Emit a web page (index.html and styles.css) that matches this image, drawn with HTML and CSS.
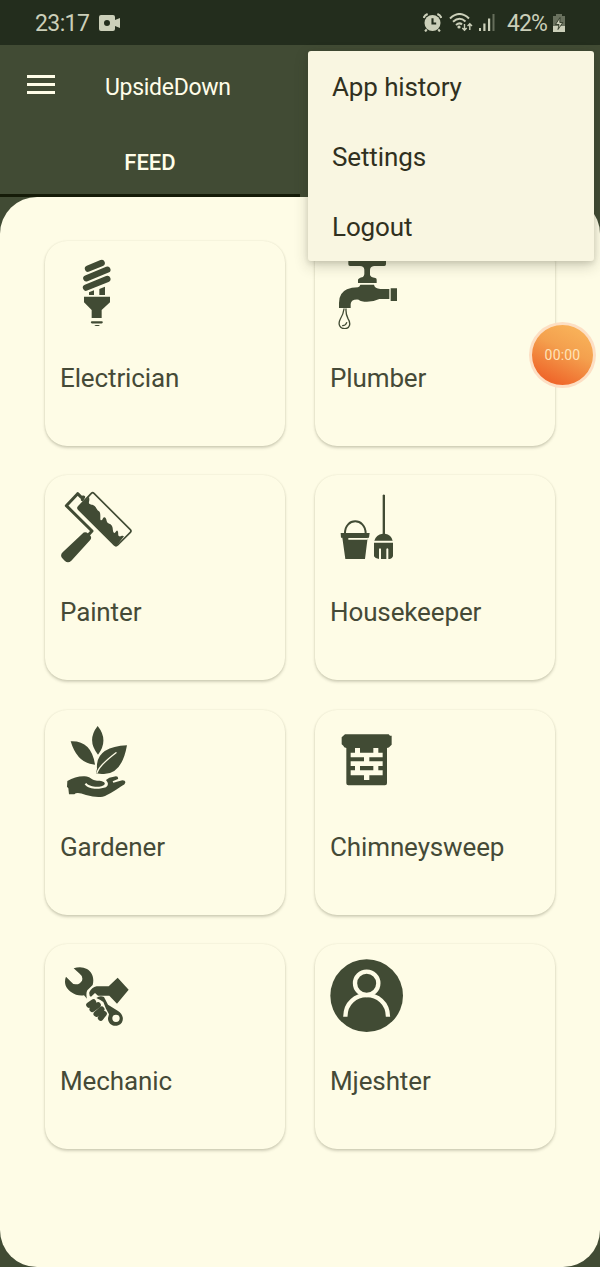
FILE: index.html
```html
<!DOCTYPE html>
<html lang="en">
<head>
<meta charset="utf-8">
<title>UpsideDown</title>
<link rel="stylesheet" href="styles.css">
</head>
<body>
<div class="app">
  <div class="statusbar">
    <span class="clock">23:17</span>
    <svg class="cam" viewBox="0 0 22 16"><path fill-rule="evenodd" d="M2 0H14Q16 0 16 2V5L21 3V13L16 11V14Q16 16 14 16H2Q0 16 0 14V2Q0 0 2 0ZM8 5A3 3 0 1 0 8 11A3 3 0 1 0 8 5Z"/></svg>
    <span class="grow"></span>
    <svg class="alarm" viewBox="0 0 18 18"><circle cx="9" cy="9.500" r="7.600"/><path d="M3.500 15.500L2 17.500M14.500 15.500L16 17.500M.6 4.600Q1.500 2 4.400 .9M17.400 4.600Q16.500 2 13.600 .9" class="s2"/><path d="M9 5V10H12.500" class="cut"/></svg>
    <svg class="wifi" viewBox="0 0 24 19"><path class="s2" d="M1 5.500Q10.500 -3.500 20 5.500M4 8.800Q10.500 3 16.500 8.500M7 12Q10.500 9 13 11.500"/><circle cx="10" cy="14" r="1.600"/><path class="s1" d="M15.500 11V17M13.300 15L15.500 17.300L17.700 15M20.800 17V11M18.600 13L20.800 10.700L23 13"/></svg>
    <svg class="signal" viewBox="0 0 16 17"><path d="M0 14h2v3H0zM4.300 9.500h2.200V17H4.300zM9 4.500h2.200V17H9z"/><path opacity=".4" d="M13.500 0h2v17h-2z"/></svg>
    <span class="percent">42%</span>
    <svg class="battery" viewBox="0 0 12 18"><path opacity=".42" d="M3 0h6v2h3v11H0V2h3z"/><path d="M0 12h12v6H0z"/><path d="M7 3.500L2.500 10.500H6L5 15.500L9.800 8.500H6.800z" stroke="#232d1d" stroke-width=".8"/></svg>
  </div>
  <header class="header">
    <div class="toolbar">
      <svg class="burger" viewBox="0 0 28 20"><path d="M0 0h28v3H0zM0 8h28v3H0zM0 16h28v3H0z"/></svg>
      <h1 class="title">UpsideDown</h1>
    </div>
    <div class="tabs"><div class="tab">FEED</div></div>
  </header>
  <main class="sheet">
    <div class="grid">
      <article class="card">
        <svg class="icon" viewBox="60 63 220 220"><path class="tube" d="M144 101L185 84M139 130L202 104M138 158L202 132"/><path d="M147 172L162 166V180H147zM178 162L195 155V180H178zM132 185H210V202L185 225V249H155V225L132 202z"/><path d="M156 262H185" stroke-width="7" class="round"/><path d="M163 270H180L176 273H167z"/></svg>
        <h2 class="name">Electrician</h2>
      </article>
      <article class="card">
        <svg class="icon" viewBox="60 63 220 220"><path d="M115 73H228V88Q228 93 223 93H192Q180 94 180 105V120Q182 127 196 129Q200 130 200 134V144H144V134Q145 129 159 126Q163 122 163 117V104Q162 93 150 93H120Q115 93 115 88zM151 149H192Q194 160 211 162H238V192L208 192Q192 200 171 200Q153 200 146 194Q124 192 122 207V219H87V204Q87 173 111 163Q124 157 144 157Q149 156 151 149zM242 160H261V198H242z"/><path class="line" d="M102 222Q100 238 91 252C82 269 91 281 104 281C119 281 124 266 114 251Q107 238 108 222M110 263Q107 272 98 272"/></svg>
        <h2 class="name">Plumber</h2>
      </article>
      <article class="card">
        <svg class="icon" viewBox="60 46 220 220"><path class="arm" d="M127 75L131 67L124 68L113 57L79 93L156 169L143 183"/><path d="M127 177Q135 169 145 177L150 182Q157 189 150 197L94 258Q84 268 74 258L67 251Q59 242 68 233z"/><path d="M115 96L147 66Q149 75 147 81C145 90 153 89 159 91C169 95 169 105 176 109C182 112 181 122 181 132C181 139 187 138 189 131C192 124 199 128 200 139C202 149 213 146 216 154C220 161 217 170 222 175C227 177 228 166 232 168C237 171 232 182 238 185C243 187 246 180 252 185L232 211Q228 216 223 210L115 103Q112 100 115 96z"/><path class="roller" d="M116 96L154 56Q158 52 162 56L271 165Q275 169 271 173L233 211Q228 216 223 211L116 104Q112 100 116 96z"/></svg>
        <h2 class="name">Painter</h2>
      </article>
      <article class="card">
        <svg class="icon" viewBox="60 46 220 220"><path class="handle" d="M105 176C105 128 166 128 167 176"/><path fill-rule="evenodd" d="M92 175H179L177 189H173L165 253H106L97 189H93zM115 190H173V195H115zM218 61Q221 58 225 61V177Q244 180 248 198H193Q198 180 218 177zM192 204H249V245Q247 251 240 253H235V223Q232 219 229 223V253H213V223Q210 219 207 223V253Q195 251 192 245z"/></svg>
        <h2 class="name">Housekeeper</h2>
      </article>
      <article class="card">
        <svg class="icon" viewBox="60 50 220 220"><path d="M173 53Q207 95 174 139Q139 96 173 53zM92 99Q154 96 165 169Q112 166 92 99zM261 111Q166 116 171 181L168 195L179 196Q244 207 261 111zM82 218Q107 203 134 204C153 205 151 215 171 217C189 216 198 223 193 229C187 237 150 239 139 224L134 228C149 247 182 242 198 237Q207 230 202 221L198 215L208 208L228 204Q236 205 234 212L218 219L220 223L247 216Q256 216 256 223Q255 228 245 233Q205 261 188 265Q169 269 138 260Q110 249 103 258L87 258L85 240L81 235z"/><path class="vein" d="M171 193Q179 170 228 133"/></svg>
        <h2 class="name">Gardener</h2>
      </article>
      <article class="card">
        <svg class="icon" viewBox="60 50 220 220"><path fill-rule="evenodd" d="M105 78H236L240 82H245V109L241 113Q237 119 231 119V225Q231 231 225 231H115Q109 231 109 225V119Q101 118 100 112L95 108V87L100 82zM135 119V133H122V147H162V159H122V173H135V186H122V201H162V215H178V201H218V186H205V173H218V159H178V147H218V133H205V119H190V133H150V119zM150 173H190V186H150z"/></svg>
        <h2 class="name">Chimneysweep</h2>
      </article>
      <article class="card">
        <svg class="icon" viewBox="60 51 220 220"><path fill-rule="evenodd" d="M101 79Q123 71 141 81C158 91 163 110 158 129L142 145Q137 154 141 170L132 160Q111 163 93 150C74 137 72 118 78 104L93 119Q99 128 109 127Q119 127 126 116Q130 103 119 95zM148 151Q155 136 170 133H206L233 107L266 143L231 185L208 161H174L165 153L153 164Q147 163 148 151zM169 168Q180 159 192 165L204 188L233 206C253 217 254 243 235 250C217 256 203 243 204 228L207 217L198 200L190 180L181 174zM228 218A11 11 0 1 0 228 240A11 11 0 1 0 228 218z"/><path class="finger" d="M147 189L160 180M157 202L174 189M169 216L185 202M182 228L192 215"/></svg>
        <h2 class="name">Mechanic</h2>
      </article>
      <article class="card">
        <svg class="icon" viewBox="60 51 220 220"><circle cx="170" cy="161" r="109"/><g class="person"><circle cx="170" cy="124" r="35"/><path d="M106 224C107 138 233 138 234 224"/></g></svg>
        <h2 class="name">Mjeshter</h2>
      </article>
    </div>
  </main>
  <nav class="menu">
    <a class="item">App history</a>
    <a class="item">Settings</a>
    <a class="item">Logout</a>
  </nav>
  <div class="recorder">00:00</div>
</div>
</body>
</html>
```
FILE: styles.css
```css
* { box-sizing: border-box; }
body { margin: 0; font-family: Roboto, "Noto Sans", sans-serif; }
.app {
  position: relative;
  width: 600px;
  height: 1267px;
  display: flex;
  flex-direction: column;
  background: #414b34;
  overflow: hidden;
}
.statusbar {
  height: 45px;
  flex: none;
  display: flex;
  align-items: center;
  padding: 0 35px 0 35px;
  background: #232d1d;
  color: #cbcfb9;
  fill: #cbcfb9;
  font-size: 23px;
}
.grow { flex: 1; }
.clock { width: 55px; margin-right: 9px; letter-spacing: -.6px; padding-top: 2px; }
.cam { width: 22px; height: 16px; }
.alarm { width: 19px; height: 19px; margin-right: 7px; }
.wifi { width: 24px; height: 19px; margin-right: 6px; }
.signal { width: 16px; height: 17px; margin-right: 12px; }
.percent { width: 41px; margin-right: 5px; letter-spacing: -.9px; padding-top: 2px; }
.battery { width: 12px; height: 18px; }
.s1, .s2, .cut { fill: none; stroke: #cbcfb9; stroke-width: 2; }
.s1 { stroke-width: 1.4; }
.cut { stroke: #232d1d; }

.header { height: 152px; flex: none; color: #fffde8; }
.toolbar { height: 83px; display: flex; align-items: center; padding-left: 27px; }
.burger { width: 28px; height: 20px; margin-right: 50px; margin-top: -3px; fill: #fffde8; }
.title { margin: 1px 0 0; font-size: 23px; font-weight: 400; letter-spacing: -.3px; }
.tabs { height: 69px; display: flex; }
.tab {
  width: 300px;
  padding-top: 21px;
  text-align: center;
  font-size: 22px;
  line-height: 28px;
  font-weight: 500;
  border-bottom: 3px solid #151b08;
}

.sheet {
  flex: 1;
  padding: 44px 45px 0;
  border-radius: 37px;
  background: #fefce6;
}
.grid { display: grid; grid-template-columns: 240px 240px; column-gap: 30px; row-gap: 29.3px; }
.card {
  height: 205px;
  padding: 15px;
  border-radius: 22px;
  background: #fefce6;
  box-shadow: 0 2px 3px rgba(70, 70, 45, .24), 0 0 2px rgba(70, 70, 45, .12);
}
.icon { display: block; width: 73.33px; height: 73.33px; fill: #414b34; }
.name {
  margin: 32.600px 0 0;
  font-size: 26px;
  line-height: 32px;
  font-weight: 400;
  letter-spacing: -.12px;
  color: #454a37;
}
.tube, .round, .line, .arm, .roller, .handle, .vein, .finger { fill: none; stroke: #414b34; stroke-linecap: round; stroke-linejoin: round; }
.tube { stroke-width: 19px; }
.line { stroke-width: 4px; }
.arm { stroke-width: 9px; }
.roller { stroke-width: 5px; }
.handle { stroke-width: 6px; }
.finger { stroke-width: 17px; }
.vein { stroke: #fefce6; stroke-width: 4px; }
.person { fill: none; stroke: #fefce6; stroke-width: 13px; }

.menu {
  position: absolute;
  top: 51px;
  left: 308px;
  width: 286px;
  height: 210px;
  border-radius: 3px;
  background: #f9f6e1;
  box-shadow: 0 5px 14px rgba(50, 50, 30, .22), 0 2px 5px rgba(50, 50, 30, .12);
}
.item {
  display: flex;
  align-items: center;
  height: 70px;
  padding: 2px 24px 0;
  font-size: 26px;
  letter-spacing: -.12px;
  color: #303020;
}
.recorder {
  position: absolute;
  top: 322px;
  left: 529px;
  width: 67px;
  height: 66px;
  display: flex;
  align-items: center;
  justify-content: center;
  border: 3px solid #fddfc4;
  border-radius: 50%;
  background: linear-gradient(205deg, #f8b058 15%, #f4a04e 42%, #ef682b 85%);
  color: #ffe3b8;
  font-size: 14px;
  letter-spacing: .2px;
}
```
